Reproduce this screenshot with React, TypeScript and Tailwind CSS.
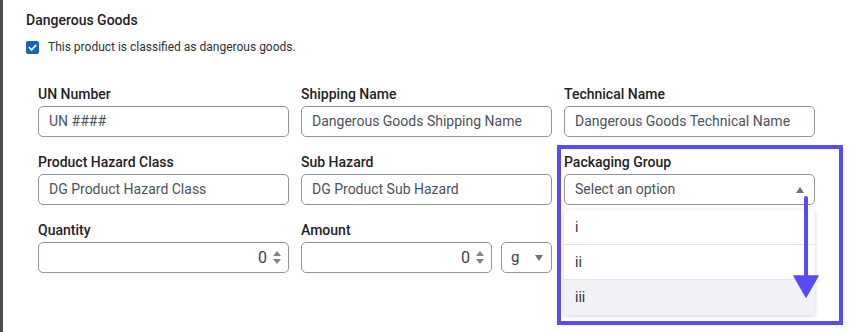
import { ReactNode } from "react";

// ----------------- SMALL PARTS -----------------
const Label = ({ children }: { children: ReactNode }) => (
  <div className="h-5 leading-5 text-[14px] font-medium text-[#1f2328] whitespace-nowrap">
    {children}
  </div>
);

const TextField = ({ placeholder }: { placeholder: string }) => (
  <div className="mt-[2px] h-[31px] rounded-[5px] border border-[#8d95a3] px-[10px] flex items-center text-[14px] text-[#4b5260] whitespace-nowrap">
    {placeholder}
  </div>
);

const Spinner = () => (
  <div className="flex flex-col items-center gap-[3px] ml-[6px]">
    <span className="w-0 h-0 border-l-[4px] border-r-[4px] border-b-[5px] border-l-transparent border-r-transparent border-b-[#7d8592]" />
    <span className="w-0 h-0 border-l-[4px] border-r-[4px] border-t-[5px] border-l-transparent border-r-transparent border-t-[#7d8592]" />
  </div>
);

const NumberField = ({ className }: { className: string }) => (
  <div
    className={`${className} h-[31px] rounded-[5px] border border-[#8d95a3] pr-[7px] flex items-center justify-end text-[16px] text-[#3b414c]`}
  >
    0
    <Spinner />
  </div>
);

const Field = ({ label, children }: { label: string; children: ReactNode }) => (
  <div className="flex flex-col">
    <Label>{label}</Label>
    {children}
  </div>
);

const App = () => {
  const options = ["i", "ii", "iii"];

  return (
    <div className="relative w-[852px] h-[332px] bg-white border-l-[3px] border-[#4d4d4d] font-['Roboto',sans-serif] overflow-hidden">
      <div className="pl-[23px] pt-[10px]">
        <div className="h-5 leading-5 text-[14px] font-medium text-[#1f2328]">
          Dangerous Goods
        </div>

        <div className="mt-[10px] h-[14px] flex items-center gap-[9px]">
          <span className="w-[13px] h-[13px] rounded-[2px] bg-[#1565c0] flex items-center justify-center">
            <svg width="9" height="9" viewBox="0 0 10 10">
              <path
                d="M1.5 5.2 L4 7.6 L8.6 2.6"
                fill="none"
                stroke="#fff"
                strokeWidth="1.9"
                strokeLinecap="round"
                strokeLinejoin="round"
              />
            </svg>
          </span>
          <span className="text-[12px] text-[#2c313a]">
            This product is classified as dangerous goods.
          </span>
        </div>

        <div className="ml-3 mt-[30px] w-[777px] grid grid-cols-3 gap-x-3 gap-y-[15px]">
          <Field label="UN Number">
            <TextField placeholder="UN ####" />
          </Field>
          <Field label="Shipping Name">
            <TextField placeholder="Dangerous Goods Shipping Name" />
          </Field>
          <Field label="Technical Name">
            <TextField placeholder="Dangerous Goods Technical Name" />
          </Field>

          <Field label="Product Hazard Class">
            <TextField placeholder="DG Product Hazard Class" />
          </Field>
          <Field label="Sub Hazard">
            <TextField placeholder="DG Product Sub Hazard" />
          </Field>
          <Field label="Packaging Group">
            <div className="relative mt-[2px]">
              <div className="h-[31px] rounded-[5px] border border-[#8d95a3] pl-[10px] pr-[10px] flex items-center justify-between text-[14px] text-[#4b5260]">
                Select an option
                <span className="w-0 h-0 border-l-[4.5px] border-r-[4.5px] border-b-[6px] border-l-transparent border-r-transparent border-b-[#6b7280]" />
              </div>
              <div className="absolute left-0 top-[36px] w-full rounded-[4px] bg-white shadow-[0_1px_4px_rgba(0,0,0,0.18)] z-10">
                {options.map((opt, i) => (
                  <div
                    key={opt}
                    className={`h-[35px] pl-[11px] flex items-center text-[14px] text-[#2c313a] ${
                      i < options.length - 1 ? "border-b border-[#e3e5ea]" : "bg-[#f1f2f6] rounded-b-[4px]"
                    }`}
                  >
                    {opt}
                  </div>
                ))}
              </div>
            </div>
          </Field>

          <Field label="Quantity">
            <div className="mt-[2px]">
              <NumberField className="w-full" />
            </div>
          </Field>
          <Field label="Amount">
            <div className="mt-[2px] flex gap-[9px]">
              <NumberField className="w-[191px]" />
              <div className="flex-1 h-[31px] rounded-[5px] border border-[#8d95a3] pl-[9px] pr-[8px] flex items-center justify-between text-[15px] text-[#3b414c]">
                g
                <span className="w-0 h-0 border-l-[4.5px] border-r-[4.5px] border-t-[6px] border-l-transparent border-r-transparent border-t-[#6b7280]" />
              </div>
            </div>
          </Field>
          <div />
        </div>
      </div>

      {/* annotation overlay */}
      <div className="absolute left-[554px] top-[145px] w-[286px] h-[180px] border-[4px] border-[#574bf6] pointer-events-none z-20" />
      <svg
        className="absolute left-[788px] top-[196px] z-20"
        width="28"
        height="104"
        viewBox="0 0 28 104"
      >
        <line x1="15" y1="2" x2="15" y2="84" stroke="#574bf6" strokeWidth="4" strokeLinecap="round" />
        <path d="M3 80 L27 80 L15 101 Z" fill="#574bf6" strokeLinejoin="round" stroke="#574bf6" strokeWidth="1.5" />
      </svg>
    </div>
  );
};

export default App;
